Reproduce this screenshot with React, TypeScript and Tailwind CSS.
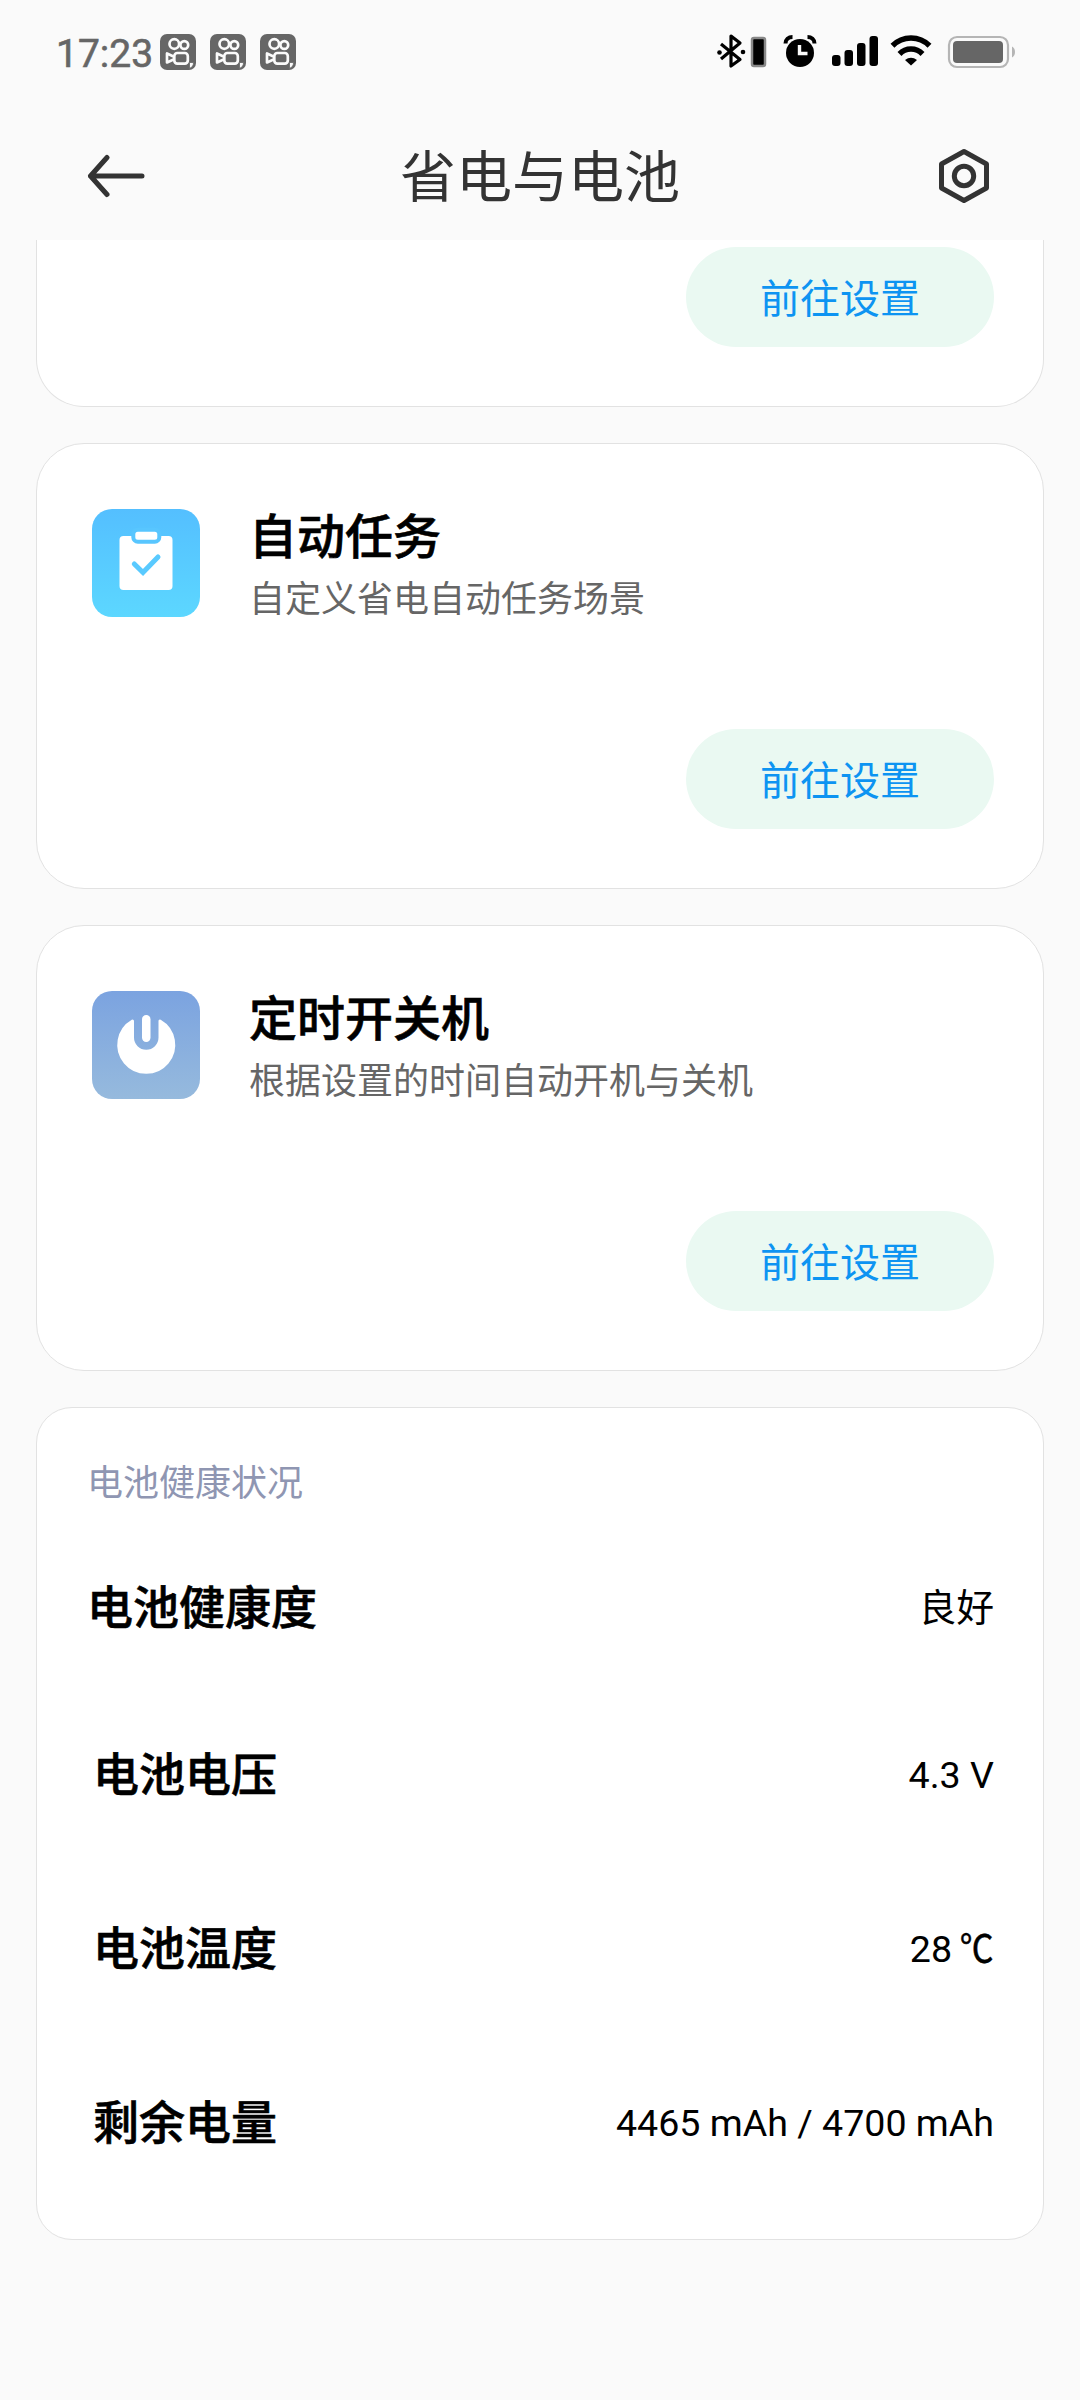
const Kwai = () => (
    <svg width="36" height="36" viewBox="0 0 36 36" fill="none" stroke="#fafafa" strokeWidth="2.7">
        <rect width="36" height="36" rx="7" fill="#666" stroke="none" />
        <circle cx="14.3" cy="10" r="4.800" />
        <circle cx="24.3" cy="11" r="3.900" />
        <rect x="14.3" y="19" width="13.5" height="10.600" rx="3" />
        <path d="M13.500 22.500 L7 19.500 V28.500 L13.500 25.500" strokeLinejoin="round" />
        <path d="M29.500 28.500h4c0 3-1 4.500-4 6z" fill="#fafafa" stroke="#666" strokeWidth="0.8" />
    </svg>
)

const StatusBar = () => {
    return (
        <div className="flex h-[104px] items-start justify-between pr-[63px] pl-14">
            <div className="flex items-start gap-[14px] pt-[34px]">
                <span className="-mr-[6px] w-24 font-['Roboto'] text-[39px] leading-[40px] text-[#666] [-webkit-text-stroke:0.6px_#666]">17:23</span>
                <Kwai />
                <Kwai />
                <Kwai />
            </div>
            <svg width="300" height="40" viewBox="0 0 300 40" className="mt-[32px]">
                <path d="M4 12 L23 27.500 L14 34 V4 L23 11 L4 27" fill="none" stroke="#000" strokeWidth="3.2" strokeLinejoin="round" />
                <circle cx="2.500" cy="20.500" r="2.300" />
                <circle cx="26" cy="20" r="2.300" />
                <rect x="35" y="6" width="13" height="28" rx="2" fill="#000" stroke="#888" strokeWidth="2.500" />
                <circle cx="83" cy="21" r="14" />
                <path d="M68.500 11.500c0-4 3-6.500 7-6.500M97.500 11.500c0-4-3-6.500-7-6.500" stroke="#000" strokeWidth="4" fill="none" />
                <path d="M82.500 13v8.500h8" stroke="#fafafa" strokeWidth="3.400" fill="none" />
                <rect x="115" y="23" width="8.500" height="11" rx="3" />
                <rect x="127.500" y="18" width="8.500" height="16" rx="3" />
                <rect x="140" y="11" width="8.500" height="23" rx="3" />
                <rect x="152.500" y="4" width="8.500" height="30" rx="3" />
                <g fill="none" stroke="#000" strokeWidth="5.500">
                    <path d="M175.500 13.800a26 26 0 0 1 37 0" />
                    <path d="M182.500 22a16 16 0 0 1 23 0" />
                </g>
                <path d="M188 28q6-4.500 12 0l-6 5.500z" />
                <rect x="232" y="5" width="59" height="30" rx="8" fill="none" stroke="#b5b5b5" strokeWidth="2.2" />
                <rect x="236" y="9" width="50" height="22" rx="4" fill="#666" />
                <path d="M295 14.500c4 2 4 9 0 11z" fill="#b5b5b5" />
            </svg>
        </div>
    )
}

const Header = () => {
    return (
        <header className="flex h-[136px] items-center justify-between pr-[89px] pl-[86px]">
            <svg width="60" height="44" viewBox="0 0 60 44" fill="none" stroke="#333" strokeWidth="5" strokeLinecap="round" strokeLinejoin="round" className="mb-[-8px]">
                <path d="M56 22H4.500M21 3.500L4.500 22l16.500 18.500" />
            </svg>
            <h1 className="mt-[12px] -ml-[3px] text-[56px] leading-[80px] text-[#333]">省电与电池</h1>
            <svg width="54" height="58" viewBox="0 0 54 58" fill="none" stroke="#333" strokeWidth="5" strokeLinejoin="round" className="mb-[-8px]">
                <path d="M27 4.500L49.500 17v24L27 53.500 4.500 41V17z" />
                <circle cx="27" cy="29" r="9.700" />
            </svg>
        </header>
    )
}

const SettingButton = () => (
    <button className="h-[100px] w-[308px] rounded-full bg-[#eaf9f2] pt-[5px] text-[40px] leading-[60px] text-[#0d94f2]">前往设置</button>
)

const TaskIcon = () => (
    <svg width="108" height="108" viewBox="0 0 108 108">
        <linearGradient id="task" x1="0" y1="0" x2="0" y2="1">
            <stop stopColor="#54bfff" />
            <stop offset="1" stopColor="#5cd7ff" />
        </linearGradient>
        <rect width="108" height="108" rx="20" fill="url(#task)" />
        <rect x="27.500" y="27" width="53" height="54" rx="4" fill="#fff" />
        <rect x="41.300" y="20.700" width="26" height="12" rx="4.500" fill="#fff" stroke="#58c6ff" strokeWidth="4" />
        <path d="M42.300 55l8.700 8.500L66 48" fill="none" stroke="#59caff" strokeWidth="5" strokeLinecap="round" />
    </svg>
)

const PowerIcon = () => (
    <svg width="108" height="108" viewBox="0 0 108 108">
        <linearGradient id="power" x1="0" y1="0" x2="0" y2="1">
            <stop stopColor="#7ba3e0" />
            <stop offset="1" stopColor="#96badd" />
        </linearGradient>
        <rect width="108" height="108" rx="20" fill="url(#power)" />
        <path d="M40.500 30A27.500 27.500 0 1 0 68 30V46.500a13.750 13.750 0 0 1-27.500 0z" fill="#fff" stroke="#fff" strokeWidth="3" strokeLinejoin="round" />
        <rect x="50" y="24" width="8.500" height="27" rx="4.200" fill="#fff" />
    </svg>
)

const Card = ({ icon, title, desc }: { icon: React.ReactNode; title: string; desc: string }) => {
    return (
        <section className="flex h-[446px] flex-col justify-between rounded-[48px] border border-[#e2e2e2] bg-white pt-[60px] pr-[49px] pb-[59px] pl-[55px]">
            <div className="flex gap-[49px]">
                <div className="mt-[5px]">{icon}</div>
                <div className="pt-[2px]">
                    <h2 className="text-[48px] leading-[64px] font-medium text-black [-webkit-text-stroke:0.6px_#000]">{title}</h2>
                    <p className="text-[36px] leading-[60px] text-[#666]">{desc}</p>
                </div>
            </div>
            <div className="flex justify-end">
                <SettingButton />
            </div>
        </section>
    )
}

const Row = ({ label, value, className }: { label: string; value: React.ReactNode; className: string }) => (
    <div className={"flex items-center justify-between " + className}>
        <span className="text-[46px] leading-[60px] font-medium [-webkit-text-stroke:0.6px_#000]">{label}</span>
        <span className="text-[37.6px] leading-[60px]">{value}</span>
    </div>
)

const App = () => {
    return (
        <div className="h-[2400px] w-[1080px] overflow-hidden bg-[#fafafa] font-['Roboto','Noto_Sans_CJK_SC',sans-serif] text-black">
            <StatusBar />
            <Header />
            <main className="flex flex-col gap-9 px-9">
                <section className="flex h-[167px] justify-end rounded-b-[48px] border border-t-0 border-[#e2e2e2] bg-white pt-[7px] pr-[49px]">
                    <SettingButton />
                </section>
                <Card icon={<TaskIcon />} title="自动任务" desc="自定义省电自动任务场景" />
                <Card icon={<PowerIcon />} title="定时开关机" desc="根据设置的时间自动开机与关机" />
                <section className="h-[833px] rounded-[36px] border border-[#e2e2e2] bg-white pt-[46px] pr-[49px] pl-[50px]">
                    <h3 className="text-[36px] leading-[60px] text-[#8f96b2]">电池健康状况</h3>
                    <Row label="电池健康度" value="良好" className="h-[187px]" />
                    <Row label="电池电压" value="4.3 V" className="h-[148px] pl-[6px]" />
                    <Row
                        label="电池温度"
                        value={<>28 <span className="-ml-[5px] inline-block origin-right scale-x-90 [-webkit-text-stroke:0.5px_#000]">℃</span></>}
                        className="h-[200px] pl-[6px]"
                    />
                    <Row label="剩余电量" value="4465 mAh / 4700 mAh" className="h-[148px] pl-[6px]" />
                </section>
            </main>
        </div>
    )
}

export default App
